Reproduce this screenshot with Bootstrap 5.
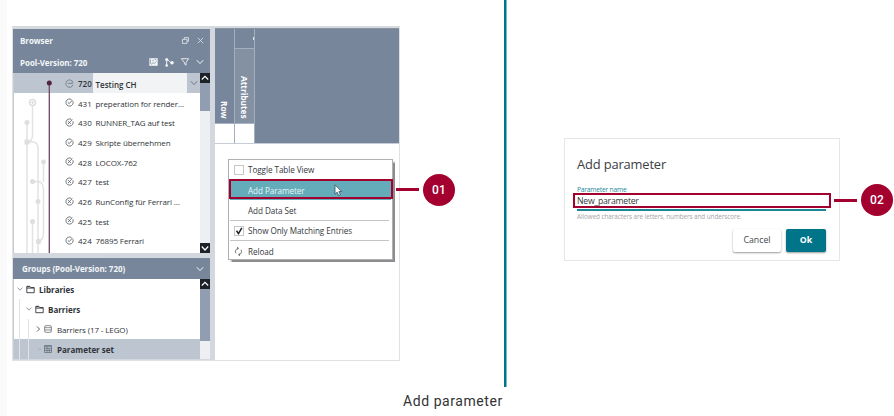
<!DOCTYPE html>
<html lang="en">
<head>
<meta charset="utf-8">
<title>Add parameter</title>
<link href="https://cdn.jsdelivr.net/npm/bootstrap@5.3.0/dist/css/bootstrap.min.css" rel="stylesheet">
<style>
body{width:894px;height:416px;overflow:hidden;background:#fff;font-family:"Open Sans","Noto Sans",sans-serif;font-size:8px;line-height:1;color:#2f3337}
svg{display:block;flex:none;overflow:visible}
.page{border-left:7px solid #fafafa;height:416px}
.figures{height:387px}
.left-fig{width:497px;padding:26px 0 0 5px}
.divider{width:3px;background:linear-gradient(90deg,#00758a 2px,#7fbac5 2px)}
.right-fig{padding:138px 0 0 57px}
.app{width:388px;height:335px;background:#fff;border:1px solid #dfe1e3;border-top:2px solid #d5dade}
.side{width:201.5px;background:#d2d8de;padding:1px 4.5px 0 0}
.bar{background:#78869b;color:#f4f6f8;font-weight:700;letter-spacing:-.05px}
.bar-browser{height:44px;padding:0 6px 0 7px}
.bar-line{height:22px}
.bar-line span{padding-top:2px}
.history{height:180px;position:relative;background:#fff;border-left:1px solid #c6ccd2;overflow:hidden}
.graph{position:absolute;left:0;top:0;z-index:1}
.ver{height:19.7px;padding-left:51px;white-space:nowrap;letter-spacing:-.1px}
.ver span{padding-top:1.5px}
.ver .num{width:17.5px;margin-left:4px;letter-spacing:0}
.ver.current{height:20px;background:#bdc5d0;letter-spacing:0}
.ver.current .num{font-weight:600}
.ver.current .title-field{background:#f1f3f5;width:94px;height:20px;line-height:19px;font-weight:600;padding-left:3px;margin-left:-3px}
.scroller{width:10px;background:#edeff3}
.thumb{background:#919db0}
.arrow{height:10px;background:#1d2229}
.splitter{height:5px}
.bar-groups{height:21px;padding:1px 6px 0 9px}
.tree{height:80px;background:#fff;border-left:1px solid #c6ccd2}
.tree b,.tree span{padding-top:2px}
.tree span{letter-spacing:-.12px}
.node{height:20px;position:relative;white-space:nowrap}
.selected{background:#bdc5d0}
.guide{border-left:1px solid #e1e4e7;width:9px;height:20px;flex:none}
.grid-head{height:115px;border-top:1px solid #8793a3;background:#78869b}
.vcol{width:20px;border-right:1px solid #a4afbd}
.vtext{writing-mode:vertical-rl;color:#fff;font-weight:700;font-size:8.3px}
.vcell{height:20px;background:#fff;border-top:1px solid #aab4c3}
.attr{background:#8491a2;border-top:1px solid #a4afbd}
.menu{position:absolute;left:228px;top:159px;width:165px;height:101px;background:#fff;border:1px solid #aeb0b2;box-shadow:1.5px 1.5px 1px #8a8c8e;color:#35383c;font-size:8.15px;letter-spacing:-.06px}
.menu-item{height:20px;padding-left:4px;margin:0 1px}
.menu-label{padding-top:1.5px}
.menu .slot{width:14px;flex:none}
.ruled{border-bottom:1px solid #c4c4c4;margin:0 3px 0 1px}
.active-item{background:#64acba;color:#e9f6f8}
.box{width:10px;height:10px;border:1px solid #c7c7c7;background:#fff}
.mark-frame{position:absolute;border:2px solid #a3002f}
.lead-line{position:absolute;height:3px;background:#a3002f}
.bubble{position:absolute;width:32px;height:32px;border-radius:50%;background:#a3002f;color:#fff;font:500 12px/32px Roboto,sans-serif;text-align:center;letter-spacing:.3px}
.dialog-box{width:276px;height:123px;border:1px solid #e5e6e7;padding:18px 13px 0 12px;background:#fff}
.dialog-title{font-size:12.9px;line-height:14px;color:#3c4044;letter-spacing:-.15px}
.field-label{font-size:6.7px;line-height:7px;color:#258a9c;margin-top:15px;letter-spacing:-.22px}
.field-value{font-size:8.7px;line-height:17px;height:18px;border-bottom:2px solid #1d8798;color:#35393d;letter-spacing:-.25px}
.hint{font-size:6.3px;line-height:7px;color:#a1a4a7;margin-top:2px;letter-spacing:-.04px}
.action{width:48px;height:23px;font-size:8.8px;line-height:23px;padding:0;border:0;border-radius:2px;color:#44484c;background:#fff;box-shadow:0 1px 2px #0006;font-weight:500}
.action.confirm{width:40px;background:#00758a;color:#fff;font-weight:700;margin-left:5px}
.caption-text{font:400 14px/16px Roboto,sans-serif;letter-spacing:.57px;color:#333;padding:6px 0 0 396px}
</style>
</head>
<body>
<svg width="0" height="0" class="position-absolute" fill="none">
 <symbol id="ok" viewBox="0 0 9 9"><g fill="none" stroke="#55595e" stroke-width=".8"><path d="M7.900 3.200A3.600 3.600 0 1 1 6.500 1.500"/><path d="M2.800 4.400l1.400 1.300 3.300-3.800"/></g></symbol>
 <symbol id="fail" viewBox="0 0 9 9"><g fill="none" stroke="#55595e" stroke-width=".8"><path d="M7.900 3.200A3.600 3.600 0 1 1 6.500 1.500"/><path d="M3 3.100l3 3M3 6l4.300-4.400"/></g></symbol>
 <symbol id="run" viewBox="0 0 9 9"><g fill="none" stroke="#6b737d" stroke-width=".8"><path d="M8 3.400A3.700 3.700 0 1 0 8 5.800M2.800 4.400h4.800M6.600 3.300l1.300 1.100"/></g></symbol>
 <symbol id="down" viewBox="0 0 8 8"><path d="M.8 2.200L4 5.600 7.200 2.200" fill="none" stroke="currentColor"/></symbol>
 <symbol id="folder" viewBox="0 0 9 9"><path d="M.8 7.700V1.300h3l.8 1.200h3.600v5.200zM.8 3.100h7.400M1 1.700h2.800" fill="none" stroke="#34383d" stroke-width=".9"/></symbol>
</svg>
<main class="page">
 <div class="figures d-flex">
  <section class="left-fig">
   <div class="app d-flex">
    <div class="side d-flex flex-column">
     <div class="bar bar-browser">
      <div class="bar-line d-flex align-items-center"><span class="me-auto">Browser</span>
       <svg width="7" height="7" viewBox="0 0 7 7" fill="none" stroke="#e8ebef" stroke-width=".8"><path d="M2.300 2.200V.6h4.200v3.600H5M.5 2.300H5v4.100H.5z"/></svg>
       <svg class="ms-2" width="7" height="7" viewBox="0 0 7 7" stroke="#e0e4e9" stroke-width=".8"><path d="M.8.8l5.400 5.400M6.200.8L.8 6.200"/></svg></div>
      <div class="bar-line d-flex align-items-center"><span class="me-auto">Pool-Version: 720</span>
       <svg width="9" height="8" viewBox="0 0 9 8"><path fill="#f2f4f6" d="M.3.2h8.400v7.600H.3z"/><path d="M1.400 1.200v4.600M3.300 2.600h1.500M2 6.500l2-1.800 1.200.8L7.600 3.200M5.600 1.500h1.800" fill="none" stroke="#78869b" stroke-width=".7"/></svg>
       <svg style="margin-left:7px" width="9" height="9" viewBox="0 0 9 9"><path d="M1.700 1.700v5.800M2 1.800c2.500 0 2 3 5 3" fill="none" stroke="#f2f4f6"/><g fill="#f2f4f6"><circle cx="1.700" cy="1.500" r="1.500"/><circle cx="1.700" cy="7.500" r="1.300"/><circle cx="7" cy="4.800" r="1.800"/></g></svg>
       <svg style="margin-left:7px" width="8" height="8" viewBox="0 0 8 8" fill="none" stroke="#eef0f3" stroke-width=".9"><path d="M.4.700h7.200L5 4.500v2.700L3.400 5.900V4.500z"/></svg>
       <svg style="margin-left:7px" width="8" height="8"><use href="#down"/></svg></div>
     </div>
     <div class="history d-flex">
      <svg class="graph" width="60" height="180" viewBox="14 73 60 180" fill="none">
       <g stroke="#e2e2e2" stroke-width="1.500"><path d="M27 123v130M32.500 103v32q0 7-5.500 7h6q5 0 5 7v104M43.500 162v20M32.500 181.500h5q6 0 6 9v43q0 6-5 8M32.500 222v31"/></g>
       <g fill="#dedede"><circle cx="27" cy="122.500" r="2.500"/><path d="M24.500 139.500h5v5h-5z"/><circle cx="43.500" cy="162" r="2.400"/><circle cx="32.500" cy="181.500" r="2.500"/><circle cx="38" cy="201.500" r="2.500"/><circle cx="32.500" cy="221.500" r="2.500"/><circle cx="38.500" cy="241.500" r="2.700"/></g>
       <circle cx="32.500" cy="102.500" r="3" stroke="#ddd" stroke-width="1.500" fill="#fff"/><path d="M32.500 101v3M31 102.500h3" stroke="#ddd"/>
       <path d="M49.300 83v170" stroke="#6f4962" stroke-width="1.300"/><circle cx="49.300" cy="83" r="2.500" fill="#54233f"/>
      </svg>
      <div class="flex-grow-1 overflow-hidden">
       <div class="ver current d-flex align-items-center"><svg width="9" height="9"><use href="#run"/></svg><span class="num">720</span><span class="title-field">Testing CH</span><svg class="ms-auto" style="color:#6d7783;margin-right:2px" width="8" height="8"><use href="#down"/></svg></div>
       <div class="ver d-flex align-items-center"><svg width="9" height="9"><use href="#ok"/></svg><span class="num">431</span><span>preperation for render...</span></div>
       <div class="ver d-flex align-items-center"><svg width="9" height="9"><use href="#fail"/></svg><span class="num">430</span><span>RUNNER_TAG auf test</span></div>
       <div class="ver d-flex align-items-center"><svg width="9" height="9"><use href="#ok"/></svg><span class="num">429</span><span>Skripte übernehmen</span></div>
       <div class="ver d-flex align-items-center"><svg width="9" height="9"><use href="#fail"/></svg><span class="num">428</span><span>LOCOX-762</span></div>
       <div class="ver d-flex align-items-center"><svg width="9" height="9"><use href="#fail"/></svg><span class="num">427</span><span>test</span></div>
       <div class="ver d-flex align-items-center"><svg width="9" height="9"><use href="#fail"/></svg><span class="num">426</span><span>RunConfig für Ferrari ...</span></div>
       <div class="ver d-flex align-items-center"><svg width="9" height="9"><use href="#fail"/></svg><span class="num">425</span><span>test</span></div>
       <div class="ver d-flex align-items-center"><svg width="9" height="9"><use href="#ok"/></svg><span class="num">424</span><span>76895 Ferrari</span></div>
      </div>
      <div class="scroller d-flex flex-column"><div class="arrow"><svg width="10" height="10" fill="none" stroke="#fff" stroke-width="1.200"><path d="M1.800 6.500L5 3.300l3.200 3.200"/></svg></div><div class="thumb" style="height:28px"></div><div class="arrow mt-auto"><svg width="10" height="10" fill="none" stroke="#fff" stroke-width="1.200"><path d="M1.800 3.500L5 7l3.200-3.500"/></svg></div></div>
     </div>
     <div class="splitter d-flex justify-content-center align-items-center"><svg width="10" height="2"><path d="M0 1h10" stroke="#b8bfc6" stroke-dasharray="1 2"/></svg></div>
     <div class="bar bar-groups d-flex align-items-center"><span class="me-auto">Groups (Pool-Version: 720)</span><svg width="8" height="8"><use href="#down"/></svg></div>
     <div class="tree d-flex">
      <div class="flex-grow-1">
       <div class="node d-flex align-items-center" style="padding-left:3px"><svg style="color:#70767c" width="6" height="6" viewBox="0 0 8 8"><use href="#down"/></svg><svg style="margin:0 4px 0 3px" width="9" height="9"><use href="#folder"/></svg><b>Libraries</b></div>
       <div class="node d-flex align-items-center" style="padding-left:5px"><i class="guide" style="width:7px"></i><svg style="color:#70767c" width="6" height="6" viewBox="0 0 8 8"><use href="#down"/></svg><svg style="margin:0 4px 0 3px" width="9" height="9"><use href="#folder"/></svg><b>Barriers</b></div>
       <div class="node d-flex align-items-center" style="padding-left:5px"><i class="guide"></i><i class="guide" style="width:7px"></i><svg width="6" height="6" fill="none" stroke="#5c6167"><path d="M2 .5L4.500 3 2 5.500"/></svg><svg style="margin:0 5px 0 3px" width="8" height="8" fill="none" stroke="#6b7075" stroke-width=".8"><rect x=".6" y=".6" width="6.800" height="6.800" rx="1.600"/><path d="M.6 2.700h6.800M.6 5h6.800"/></svg><span>Barriers (17 - LEGO)</span></div>
       <div class="node selected d-flex align-items-center" style="padding-left:5px"><i class="guide"></i><i class="guide" style="width:10px"></i><svg width="3" height="2"><path d="M0 1h3" stroke="#a5adb7"/></svg><svg style="margin:0 5px 0 3px" width="8" height="8" fill="none" stroke="#65737d" stroke-width=".8"><path d="M.5.500h7v7h-7zM.5 1.300h7M.5 3.300h7M.5 5.400h7M3 1v6.500M5.300 3.300v4.200"/></svg><b>Parameter set</b></div>
      </div>
      <div class="scroller"><div class="arrow"><svg width="10" height="10" fill="none" stroke="#fff" stroke-width="1.200"><path d="M1.800 6.500L5 3.300l3.200 3.200"/></svg></div><div class="thumb" style="height:52px"></div></div>
     </div>
    </div>
    <div class="flex-grow-1">
     <div class="grid-head d-flex">
      <div class="vcol d-flex flex-column"><div class="flex-grow-1 d-flex justify-content-center align-items-end pb-1"><span class="vtext">Row</span></div><div class="vcell"></div></div>
      <div class="vcol d-flex flex-column"><div style="height:19px" class="d-flex justify-content-end align-items-center"><svg width="2" height="4"><path d="M1.500 0v3" stroke="#d8e8f4"/></svg></div><div class="attr flex-grow-1 d-flex justify-content-center align-items-end pb-1"><span class="vtext">Attributes</span></div><div class="vcell"></div></div>
     </div>
     <div style="height:1px;background:#c6ccd5"></div>
    </div>
   </div>
  </section>
  <div class="divider"></div>
  <section class="right-fig">
   <div class="dialog-box">
    <div class="dialog-title">Add parameter</div>
    <div class="field-label">Parameter name</div>
    <div class="field-value">New_parameter</div>
    <div class="hint">Allowed characters are letters, numbers and underscore.</div>
    <div class="d-flex justify-content-end" style="margin-top:9px"><button class="action btn">Cancel</button><button class="action btn confirm">Ok</button></div>
   </div>
  </section>
 </div>
 <div class="caption-text">Add parameter</div>
</main>
<div class="menu">
 <div class="menu-item ruled d-flex align-items-center"><span class="slot"><span class="box d-block"></span></span><span class="menu-label">Toggle Table View</span></div>
 <div class="menu-item active-item d-flex align-items-center"><span class="slot"></span><span class="menu-label">Add Parameter</span></div>
 <div class="menu-item ruled d-flex align-items-center" style="height:21px"><span class="slot"></span><span class="menu-label">Add Data Set</span></div>
 <div class="menu-item ruled d-flex align-items-center"><span class="slot"><span class="box d-block"><svg width="8" height="8" fill="none" stroke="#202327" stroke-width="1.500"><path d="M1.500 3.800l2 2.800L6.800.8"/></svg></span></span><span class="menu-label">Show Only Matching Entries</span></div>
 <div class="menu-item d-flex align-items-center"><span class="slot"><svg width="9" height="9" fill="none" stroke="#666a6e" stroke-width=".9"><path d="M3 .200L4.500 1.300 3.200 2.500M4.400 1.300A3.200 3.200 0 0 0 2 6.300M6 8.800L4.500 7.700 5.800 6.500M4.600 7.700A3.200 3.200 0 0 0 7 2.700"/></svg></span><span class="menu-label">Reload</span></div>
</div>
<div class="mark-frame" style="left:229px;top:179px;width:164px;height:20px"></div>
<svg class="position-absolute" style="left:334px;top:184px" width="9" height="13"><path d="M1 .8v9.400l2.200-2 1.500 3.400 1.700-.8-1.500-3.200h2.900z" fill="#fff" stroke="#33515a" stroke-width=".8"/></svg>
<div class="lead-line" style="left:396px;top:188px;width:23px"></div>
<div class="bubble" style="left:423px;top:174px">01</div>
<div class="mark-frame" style="left:573px;top:193px;width:258px;height:15px"></div>
<div class="lead-line" style="left:834px;top:199px;width:23px"></div>
<div class="bubble" style="left:861px;top:184px">02</div>
<script src="https://cdn.jsdelivr.net/npm/bootstrap@5.3.0/dist/js/bootstrap.bundle.min.js"></script>
</body>
</html>
